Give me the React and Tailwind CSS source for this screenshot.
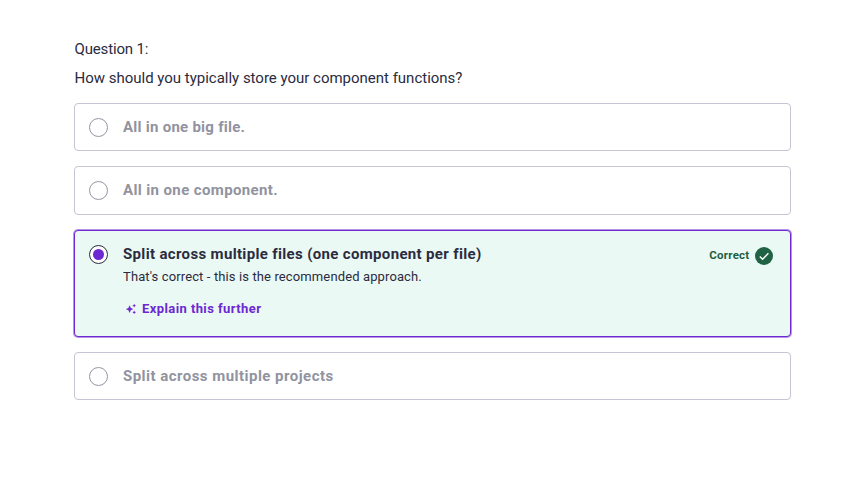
function Radio({ checked }) {
  return (
    <span
      className={`flex h-[19px] w-[19px] shrink-0 items-center justify-center rounded-full border bg-white ${
        checked ? "border-[#2a2b3f]" : "border-[#9496a3]"
      }`}
    >
      {checked && <span className="h-[11px] w-[11px] rounded-full bg-[#6d28d2]" />}
    </span>
  );
}

function Option({ label, className, labelClass }) {
  return (
    <div className={`flex items-start rounded-[4px] border border-[#c6c5d3] pl-[14px] ${className}`}>
      <span className="mt-[0.6px] flex"><Radio /></span>
      <span className={`ml-[15px] whitespace-nowrap text-[15px] leading-5 font-bold text-[#9193a0] ${labelClass}`}>
        {label}
      </span>
    </div>
  );
}

function Sparkles() {
  return (
    <svg width="10" height="10" viewBox="0 0 10 10" fill="#6d28d2" className="shrink-0">
      <path d="M3.6 1.2 4.8 3.9 7.4 5.1 4.8 6.3 3.6 9 2.4 6.3-.2 5.1 2.4 3.9Z" />
      <path d="M8.2-.2 8.8 1.1 10 1.7 8.8 2.3 8.2 3.6 7.6 2.3 6.4 1.7 7.6 1.1Z" />
      <path d="M8.2 6.4 8.8 7.7 10 8.3 8.8 8.9 8.2 10 7.6 8.9 6.4 8.3 7.6 7.7Z" />
    </svg>
  );
}

export default function App() {
  return (
    <main className="flex h-[481px] w-[849px] flex-col bg-white pt-[39px] pr-[58px] pl-[74px] font-[Roboto,sans-serif] text-[#2a2b3f]">
      <p className="ml-[0.5px] h-5 text-[15px] leading-5 tracking-[-0.15px]">Question 1:</p>
      <p className="mt-[9px] ml-[0.5px] h-5 text-[15px] leading-5 tracking-[-0.01px]">How should you typically store your component functions?</p>

      <Option label="All in one big file." className="mt-[15px] h-12 pt-[13px]" labelClass="tracking-[0.26px]" />
      <Option label="All in one component." className="mt-[15px] h-[49px] pt-[13px]" labelClass="tracking-[0.38px]" />

      <section className="mt-[15px] flex h-[107px] items-start rounded-[4px] border border-[#6d28d2] bg-[#eaf9f4] pt-[13px] pr-[17px] pl-[14px] shadow-[0_0_0_1px_#b694e9]">
        <span className="mt-px flex"><Radio checked /></span>
        <div className="ml-[15px] flex flex-col">
          <h2 className="h-5 whitespace-nowrap text-[15px] leading-5 font-bold tracking-[0.34px]">Split across multiple files (one component per file)</h2>
          <p className="mt-[3px] h-5 whitespace-nowrap text-[13px] leading-5 tracking-[0.12px]">That's correct - this is the recommended approach.</p>
          <button className="mt-3 ml-[2.5px] flex h-5 items-center text-[13px] leading-5 font-bold text-[#6d28d2]">
            <Sparkles />
            <span className="ml-[6.5px] whitespace-nowrap tracking-[0.41px]">Explain this further</span>
          </button>
        </div>
        <div className="mt-[3px] ml-auto flex items-start text-[11.5px] leading-[18px] font-bold text-[#1d5f3f]">
          <span className="-mt-px tracking-[0.25px]">Correct</span>
          <svg width="18" height="18" viewBox="0 0 18 18" className="ml-[5.5px]">
            <circle cx="9" cy="9" r="9" fill="#206344" />
            <path d="m4.8 9.4 2.8 2.8 5.8-5.9" fill="none" stroke="#fff" strokeWidth="1.4" />
          </svg>
        </div>
      </section>

      <Option label="Split across multiple projects" className="mt-[15px] h-12 pt-[13px]" labelClass="tracking-[0.47px]" />
    </main>
  );
}
